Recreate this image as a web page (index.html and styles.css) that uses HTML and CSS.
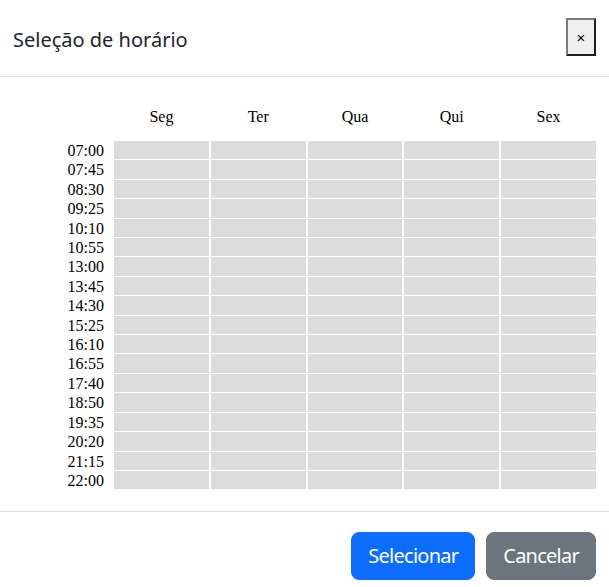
FILE: index.html
```html
<!DOCTYPE html>
<html lang="pt">
<head>
<meta charset="utf-8">
<title>Seleção de horário</title>
<link rel="stylesheet" href="styles.css">
</head>
<body>
<div class="modal">
  <div class="modal-header">
    <h5 class="modal-title">Seleção de horário</h5>
    <button class="close-btn" type="button">×</button>
  </div>
  <div class="modal-body">
    <table class="grid">
      <colgroup>
        <col class="col-label">
        <col><col><col><col><col>
      </colgroup>
      <thead>
        <tr><th></th><th>Seg</th><th>Ter</th><th>Qua</th><th>Qui</th><th>Sex</th></tr>
      </thead>
      <tbody>
        <tr><td class="time">07:00</td><td class="slot"></td><td class="slot"></td><td class="slot"></td><td class="slot"></td><td class="slot"></td></tr>
        <tr><td class="time">07:45</td><td class="slot"></td><td class="slot"></td><td class="slot"></td><td class="slot"></td><td class="slot"></td></tr>
        <tr><td class="time">08:30</td><td class="slot"></td><td class="slot"></td><td class="slot"></td><td class="slot"></td><td class="slot"></td></tr>
        <tr><td class="time">09:25</td><td class="slot"></td><td class="slot"></td><td class="slot"></td><td class="slot"></td><td class="slot"></td></tr>
        <tr><td class="time">10:10</td><td class="slot"></td><td class="slot"></td><td class="slot"></td><td class="slot"></td><td class="slot"></td></tr>
        <tr><td class="time">10:55</td><td class="slot"></td><td class="slot"></td><td class="slot"></td><td class="slot"></td><td class="slot"></td></tr>
        <tr><td class="time">13:00</td><td class="slot"></td><td class="slot"></td><td class="slot"></td><td class="slot"></td><td class="slot"></td></tr>
        <tr><td class="time">13:45</td><td class="slot"></td><td class="slot"></td><td class="slot"></td><td class="slot"></td><td class="slot"></td></tr>
        <tr><td class="time">14:30</td><td class="slot"></td><td class="slot"></td><td class="slot"></td><td class="slot"></td><td class="slot"></td></tr>
        <tr><td class="time">15:25</td><td class="slot"></td><td class="slot"></td><td class="slot"></td><td class="slot"></td><td class="slot"></td></tr>
        <tr><td class="time">16:10</td><td class="slot"></td><td class="slot"></td><td class="slot"></td><td class="slot"></td><td class="slot"></td></tr>
        <tr><td class="time">16:55</td><td class="slot"></td><td class="slot"></td><td class="slot"></td><td class="slot"></td><td class="slot"></td></tr>
        <tr><td class="time">17:40</td><td class="slot"></td><td class="slot"></td><td class="slot"></td><td class="slot"></td><td class="slot"></td></tr>
        <tr><td class="time">18:50</td><td class="slot"></td><td class="slot"></td><td class="slot"></td><td class="slot"></td><td class="slot"></td></tr>
        <tr><td class="time">19:35</td><td class="slot"></td><td class="slot"></td><td class="slot"></td><td class="slot"></td><td class="slot"></td></tr>
        <tr><td class="time">20:20</td><td class="slot"></td><td class="slot"></td><td class="slot"></td><td class="slot"></td><td class="slot"></td></tr>
        <tr><td class="time">21:15</td><td class="slot"></td><td class="slot"></td><td class="slot"></td><td class="slot"></td><td class="slot"></td></tr>
        <tr><td class="time">22:00</td><td class="slot"></td><td class="slot"></td><td class="slot"></td><td class="slot"></td><td class="slot"></td></tr>
      </tbody>
    </table>
  </div>
  <div class="modal-footer">
    <button class="btn btn-primary" type="button">Selecionar</button>
    <button class="btn btn-secondary" type="button">Cancelar</button>
  </div>
</div>
</body>
</html>
```
FILE: styles.css
```css
* { box-sizing: border-box; }
html, body { margin: 0; padding: 0; background: #fff; }
body {
  font-family: "Noto Sans", "Open Sans", sans-serif;
  color: #212529;
  width: 609px;
  height: 587px;
  overflow: hidden;
}
.modal { width: 609px; }

.modal-header {
  display: flex;
  justify-content: space-between;
  align-items: flex-start;
  height: 77px;
  padding: 0 13px;
  border-bottom: 1px solid #dee2e6;
}
.modal-title {
  margin: 25px 0 0 0;
  font-size: 20px;
  font-weight: 400;
  line-height: 30px;
}
.close-btn {
  margin-top: 18px;
  width: 30px;
  height: 38px;
  padding: 0;
  background: #efefef;
  border: 2px solid;
  border-color: #7a7a7a #1f1f1f #1f1f1f #7a7a7a;
  border-radius: 0;
  font-family: "Liberation Sans", Arial, sans-serif;
  font-size: 15px;
  line-height: 1;
  color: #000;
}

.modal-body { padding: 16px 13px 21px; }
.grid {
  width: calc(100% + 4px);
  margin: 0 -2px;
  border-collapse: separate;
  border-spacing: 2px 1px;
  table-layout: fixed;
  font-family: "Liberation Serif", "Times New Roman", serif;
  font-size: 16px;
  color: #000;
}
.col-label { width: 99px; }
.grid th {
  height: 46px;
  padding: 0;
  font-weight: 400;
  text-align: center;
  vertical-align: middle;
}
.grid td { padding: 0; height: 18.4px; line-height: 18.4px; }
.grid .time {
  text-align: right;
  padding: 2px 8px 0 0;
  line-height: 16.4px;
}
.grid .slot { background: #dcdcdc; }

.modal-footer {
  display: flex;
  justify-content: flex-end;
  gap: 11px;
  padding: 20px 13px 7px;
  border-top: 1px solid #dee2e6;
}
.btn {
  height: 48px;
  padding: 8px 16px;
  font-family: "Noto Sans", "Open Sans", sans-serif;
  font-size: 20px;
  line-height: 30px;
  letter-spacing: -0.75px;
  border: 1px solid transparent;
  border-radius: 8px;
  color: #fff;
}
.btn-primary { background: #0d6efd; border-color: #0d6efd; }
.btn-secondary { background: #6c757d; border-color: #6c757d; }
```
